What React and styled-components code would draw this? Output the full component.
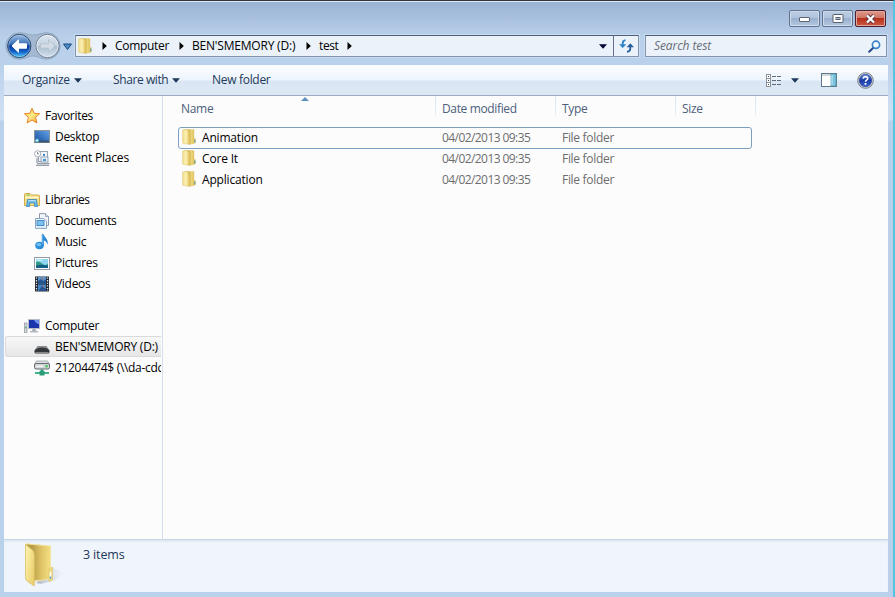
import React from "react";
import styled, { createGlobalStyle } from "styled-components";

const GlobalStyle = createGlobalStyle`
* {
    box-sizing: border-box;
}
body {
    margin: 0;
    overflow: hidden;
    background: #b9d1ea;
}
svg {
    display: block;
    flex: none;
}`;

const Window = styled.div`
    width: 895px;
    height: 597px;
    display: flex;
    flex-direction: column;
    padding: 0 5px 5px 4px;
    border-top: 1px solid #35353f;
    border-right: 2px solid #55c3e2;
    box-shadow: inset 0 1px 0 #dfe9f5;
    background: linear-gradient(#9ab3d3 0, #a9c1de 18px, #b9d0eb 36px, #bad1ec 64px, #c9dcf1 100px, #cfe0f3 118px, #b9d1ea 121px, #bad1ec 100%);
    font-family: "Open Sans", "Noto Sans", sans-serif;
    font-size: 12px;
    color: #000;
`;

const Label = styled.span`
    flex: none;
    line-height: 20px;
    white-space: pre;
    color: ${props => props.$color || "inherit"};
    letter-spacing: ${props => props.$track ?? -0.3}px;
`;

const TitleBar = styled.div`
    height: 34px;
    flex: none;
    display: flex;
    justify-content: flex-end;
    gap: 2px;
    padding: 9px 2px 0 0;
`;

const WindowButton = styled.button`
    width: 31px;
    height: 17px;
    display: flex;
    align-items: center;
    justify-content: center;
    padding: 0;
    border: 1px solid ${props => props.$close ? "#4d1d2a" : "#61748f"};
    border-radius: 2px;
    box-shadow: inset 0 0 0 1px ${props => props.$close ? "#e0a79f" : "#cddbeb"};
    background: ${props => props.$close ?
        "linear-gradient(#dd9a8c 0, #cf7362 48%, #b8301c 50%, #cb5a42 100%)" :
        "linear-gradient(#bccde2 0, #afc3dc 48%, #9ab1cf 50%, #b3c7df 100%)"};
`;

const NavBar = styled.div`
    height: 30px;
    flex: none;
    display: flex;
    align-items: flex-start;
    padding-right: 1px;
`;

const History = styled.div`
    width: 71px;
    height: 22px;
    flex: none;
    svg {
        margin-top: -3px;
    }
`;

const Field = styled.div`
    height: 22px;
    display: flex;
    align-items: center;
    border: 1px solid #8393ab;
    border-top-color: #4f5e78;
    background: #ebf2fa;
    box-shadow: 0 0 0 1px #c9dcf1;
`;

const AddressBar = styled(Field)`
    width: 564px;
    padding-left: 2px;
`;

const Crumb = styled.div`
    display: flex;
    align-items: center;
    width: ${props => props.$width}px;
`;

const Refresh = styled.div`
    width: 25px;
    height: 20px;
    display: flex;
    align-items: center;
    justify-content: center;
    margin-left: auto;
    border-left: 1px solid #63718a;
`;

const SearchBox = styled(Field)`
    flex: 1;
    justify-content: space-between;
    margin-left: 6px;
    padding: 0 5px 0 8px;
    font-style: italic;
`;

const Toolbar = styled.div`
    height: 31px;
    flex: none;
    display: flex;
    align-items: center;
    padding: 0 14px 1px 18px;
    border-top: 1px solid #f6faff;
    border-bottom: 1px solid #9caac4;
    background: linear-gradient(#fbfdff 0, #edf4fc 48%, #dbe6f4 52%, #dde8f5 100%);
    color: #1e395b;
`;

const MenuButton = styled.div`
    display: flex;
    align-items: center;
    gap: 4px;
    width: ${props => props.$width}px;
`;

const ToolIcons = styled.div`
    display: flex;
    align-items: center;
    margin-left: auto;
`;

const Gap = styled.div`
    width: ${props => props.$size}px;
    flex: none;
`;

const Body = styled.div`
    flex: 1;
    min-height: 0;
    display: flex;
    background: #fcfcfd;
`;

const Sidebar = styled.div`
    width: 159px;
    flex: none;
    padding-top: 9px;
    border-right: 1px solid #d6dff0;
    overflow: hidden;
`;

const Group = styled.div`
    margin-bottom: 21px;
`;

const TreeItem = styled.div`
    height: 21px;
    display: flex;
    align-items: center;
    gap: 5px;
    overflow: hidden;
    margin: 0 1px;
    padding-left: ${props => props.$root ? 18 : 28}px;
    border: 1px solid ${props => props.$selected ? "#dadada" : "transparent"};
    border-right: 0;
    border-radius: 3px 0 0 3px;
    background: ${props => props.$selected ? "linear-gradient(#f8f8f8, #e6e6e6)" : "none"};
`;

const Files = styled.div`
    flex: 1;
`;

const HeaderRow = styled.div`
    height: 31px;
    display: flex;
    padding-left: 12px;
    color: #4c607a;
`;

const HeaderCell = styled.div`
    width: ${props => props.$width}px;
    height: 20px;
    position: relative;
    display: flex;
    padding: 3px 0 0 6px;
    border-right: 1px solid;
    border-image: linear-gradient(#d5e2f2, #e9f0f8) 1;
`;

const SortMark = styled.svg`
    position: absolute;
    top: 1px;
    left: 126px;
`;

const FileRow = styled.div`
    width: 574px;
    height: ${props => props.$focused ? 22 : 21}px;
    display: grid;
    grid-template-columns: 20px 240px 120px auto;
    align-items: center;
    margin-left: 15px;
    margin-bottom: ${props => props.$focused ? -1 : 0}px;
    padding-left: ${props => props.$focused ? 3 : 4}px;
    border: ${props => props.$focused ? "1px solid #7c9fc0" : "0"};
    border-radius: 3px;
    color: #6d6d6d;
    svg {
        margin-top: -2px;
    }
`;

const Details = styled.div`
    height: 53px;
    flex: none;
    display: flex;
    padding: 3px 0 0 18px;
    border-top: 1px solid #c5d5e5;
    box-shadow: inset 0 2px 1px #e2eaf3;
    background: #f0f4fb;
    font-size: 12.5px;
`;

const Count = styled.div`
    padding: 2px 0 0 15px;
`;

const FolderIcon = ({ size = 16 }) => (
    <svg width={size * 0.9} height={size} viewBox="0 0 36 40">
        <defs>
            <linearGradient id="folderBack" x1="0" x2="1">
                <stop offset=".4" stopColor="#c9a944" />
                <stop offset=".7" stopColor="#ecd47a" />
                <stop offset="1" stopColor="#e3c55f" />
            </linearGradient>
            <linearGradient id="folderFront" x1="0" x2="1">
                <stop offset="0" stopColor="#f0dc8c" />
                <stop offset=".45" stopColor="#fdf2b5" />
                <stop offset="1" stopColor="#dcbb50" />
            </linearGradient>
        </defs>
        <path d="M7 1.500L30 1V36L20 38L7 33Z" fill="url(#folderBack)" stroke="#dcc36d" />
        <path d="M1.500 2.500L13 1.500Q20 5 20 12V39L3 36Q1.500 35 1.500 33Z" fill="url(#folderFront)" stroke="#d5ba58" />
        <path d="M28 25L34 22V35L28 37Z" fill="#e7ca62" />
        <path d="M32 26V34" stroke="#5b9caf" strokeWidth="3" />
    </svg>
);

const BigFolder = () => (
    <svg width="46" height="46" viewBox="0 0 46 46">
        <defs>
            <linearGradient id="bigBack" x1="0" x2="1">
                <stop offset=".25" stopColor="#b99d45" />
                <stop offset=".6" stopColor="#dcc265" />
                <stop offset="1" stopColor="#f5df83" />
            </linearGradient>
            <linearGradient id="bigFront" x1="0" x2="1" y1="0" y2=".7">
                <stop offset="0" stopColor="#fff5b5" />
                <stop offset="1" stopColor="#ebd06c" />
            </linearGradient>
            <linearGradient id="bigShade" x1="0" x2="1">
                <stop offset="0" stopColor="#9ba1aa" stopOpacity=".75" />
                <stop offset="1" stopColor="#c5cbd5" stopOpacity="0" />
            </linearGradient>
        </defs>
        <path d="M14 40L31 25L42 29L34 37L19 41Z" fill="url(#bigShade)" />
        <path d="M4 .8L28.500 3V36L12 38L5 30Z" fill="url(#bigBack)" stroke="#f1e4a2" />
        <path d="M3.500 1.500L10.500 7Q12.300 8.500 12.300 12V43L5 38Q3.500 37 3.500 34Z" fill="url(#bigFront)" stroke="#d8c16b" strokeWidth=".8" />
        <path d="M27 26L30.500 24V37L27 38.500Z" fill="#f1dc86" stroke="#d8bd60" strokeWidth=".6" />
        <path d="M28.500 29V36" stroke="#fff" strokeWidth="1.500" />
        <path d="M28.500 33.500V36" stroke="#62a6b8" strokeWidth="1.500" />
    </svg>
);

const Arrow = () => (
    <svg width="5" height="8" viewBox="0 0 5 8"><path d="M.5 0L4.800 4L.5 8Z" fill="#000" /></svg>
);

const DownArrow = ({ fill = "#1e395b" }) => (
    <svg width="8" height="5" viewBox="0 0 8 5"><path d="M0 .3H8L4 4.800Z" fill={fill} /></svg>
);

const HistoryIcon = () => (
    <svg width="71" height="28" viewBox="0 0 71 28">
        <defs>
            <linearGradient id="back" x1="0" y1="0" x2="0" y2="1">
                <stop offset="0" stopColor="#9fbfe4" />
                <stop offset=".43" stopColor="#376fb8" />
                <stop offset=".5" stopColor="#07399a" />
                <stop offset=".75" stopColor="#1663c9" />
                <stop offset="1" stopColor="#55d2ff" />
            </linearGradient>
            <linearGradient id="fwd" x1="0" y1="0" x2="0" y2="1">
                <stop offset="0" stopColor="#dce6f0" />
                <stop offset=".48" stopColor="#c3d0de" />
                <stop offset=".52" stopColor="#adbfd1" />
                <stop offset="1" stopColor="#d3e1ef" />
            </linearGradient>
        </defs>
        <path d="M15 .8C22 .8 24 3 29 3S37 .8 43 .8A13.200 13.200 0 0 1 43 27.200C37 27.200 34 24 29 24S22 27.200 15 27.200A13.200 13.200 0 0 1 15 .8Z" fill="#a3b8d1" stroke="#8ea3bd" strokeWidth=".8" />
        <circle cx="15.300" cy="14" r="11.600" fill="url(#back)" stroke="#27466f" />
        <circle cx="15.300" cy="14" r="10.700" fill="none" stroke="#cfe4f8" strokeOpacity=".5" strokeWidth=".8" />
        <path d="M8 14L14.500 7.800V11.800H22.500V16.200H14.500V20.200Z" fill="#fff" stroke="#fff" strokeLinejoin="round" />
        <circle cx="43.500" cy="14" r="11.600" fill="url(#fwd)" stroke="#6e7d91" />
        <circle cx="43.500" cy="14" r="10.600" fill="none" stroke="#eef4fa" strokeOpacity=".7" />
        <path d="M51 14L44.500 7.800V11.800H36.500V16.200H44.500V20.200Z" fill="#d3dce5" stroke="#b0bfcd" strokeLinejoin="round" strokeWidth=".8" />
        <path d="M59.500 12H67.500L63.500 17.500Z" fill="#478bc9" stroke="#234a7c" strokeLinejoin="round" />
    </svg>
);

const RefreshIcon = () => (
    <svg width="15" height="14" viewBox="0 0 15 14">
        <path d="M6.500 1.200Q3.700 1.500 3.700 4.500V7" fill="none" stroke="#2f83c5" strokeWidth="1.800" />
        <path d="M0 5.200H7.400L3.700 9Z" fill="#2f83c5" />
        <path d="M8 12.800Q11.300 12.500 11.300 9.500V7" fill="none" stroke="#2a5f9e" strokeWidth="1.800" />
        <path d="M7.600 8.200H15L11.300 4.300Z" fill="#2a5f9e" />
    </svg>
);

const SearchIcon = () => (
    <svg width="13" height="13" viewBox="0 0 13 13">
        <path d="M1.200 11.800L5.500 7.500" stroke="#294a86" strokeWidth="2" strokeLinecap="round" />
        <circle cx="8" cy="4.800" r="3.600" fill="#f4faff" stroke="#3b82c8" strokeWidth="1.700" />
    </svg>
);

const ViewIcon = () => (
    <svg width="16" height="13" viewBox="0 0 16 13">
        {[0, 4, 8].map(y => (
            <g key={y}>
                <rect x=".5" y={y + 0.5} width="4" height="4" fill="#fff" stroke="#8d9199" />
                <rect x="2" y={y + 2} width="1" height="1" fill="#444b5c" />
                <path d={`M6 ${y + 2.5}H10M11 ${y + 2.5}H15`} stroke="#626a7a" />
            </g>
        ))}
    </svg>
);

const PaneIcon = () => (
    <svg width="16" height="14" viewBox="0 0 16 14">
        <rect x=".5" y=".5" width="15" height="13" fill="#fff" stroke="#61788c" />
        <path d="M1 2H10" stroke="#c2cad2" strokeWidth="1.500" />
        <rect x="10" y="1" width="5" height="12" fill="#79c4dc" stroke="#5594ae" strokeWidth=".7" />
        <path d="M11 2V12" stroke="#c4ebf5" />
    </svg>
);

const HelpIcon = () => (
    <svg width="17" height="17" viewBox="0 0 17 17">
        <defs>
            <linearGradient id="help" x1="0" y1="0" x2="0" y2="1">
                <stop offset="0" stopColor="#5e86da" />
                <stop offset=".5" stopColor="#1b3ba4" />
                <stop offset="1" stopColor="#3c65cd" />
            </linearGradient>
        </defs>
        <circle cx="8.500" cy="8.500" r="7.800" fill="#d8dce3" stroke="#737985" />
        <circle cx="8.500" cy="8.500" r="6.200" fill="url(#help)" stroke="#25388b" strokeWidth=".6" />
        <path d="M6.200 6.600Q6.300 4.600 8.500 4.600T10.700 6.500Q10.700 7.500 9.600 8.100T8.500 9.800" fill="none" stroke="#fff" strokeWidth="1.600" />
        <rect x="7.600" y="11" width="1.800" height="1.800" fill="#fff" />
    </svg>
);

const icons = {
    star: (
        <svg width="16" height="16" viewBox="0 0 16 16">
            <defs>
                <linearGradient id="star" x1="0" y1="0" x2="1" y2="1">
                    <stop offset="0" stopColor="#ffc93a" />
                    <stop offset=".5" stopColor="#ffe98a" />
                    <stop offset="1" stopColor="#f59a1b" />
                </linearGradient>
            </defs>
            <path d="M8 .3L10.200 5.200L15.600 5.800L11.600 9.400L12.900 15L8 12L3.100 15L4.400 9.400L.4 5.800L5.800 5.200Z" fill="url(#star)" stroke="#e5842b" strokeLinejoin="round" />
        </svg>
    ),
    desktop: (
        <svg width="16" height="16" viewBox="0 0 16 16">
            <defs>
                <linearGradient id="desk" x1="0" y1="1" x2="1" y2="0">
                    <stop offset="0" stopColor="#1a4b9d" />
                    <stop offset="1" stopColor="#5fa4e8" />
                </linearGradient>
            </defs>
            <rect x=".5" y="1.500" width="15" height="12" fill="url(#desk)" stroke="#8c9297" />
            <rect x="1" y="11.500" width="14" height="2" fill="#3b5670" />
            <circle cx="3" cy="11.500" r="1.900" fill="#69c0e5" />
            <path d="M2 11.500H4" stroke="#e8f5ff" />
        </svg>
    ),
    recent: (
        <svg width="16" height="16" viewBox="0 0 16 16">
            <rect x="4.500" y="1.500" width="9" height="10" fill="#f0f4f8" stroke="#9aa5af" />
            <rect x="7" y="7" width="7" height="5" fill="#e4eff8" stroke="#8498aa" strokeWidth=".8" />
            <rect x="9" y="4" width="2" height="2" fill="#3488ce" />
            <rect x="9" y="9" width="3" height="2" fill="#4796d2" />
            <path d="M3 13.500H15.500M2 15.300H15" stroke="#98a1aa" strokeWidth="1.300" />
            <path d="M3 8V13" stroke="#a3acb4" strokeWidth="1.500" />
            <circle cx="3.600" cy="3.800" r="3.100" fill="#fff" stroke="#a4adb6" />
            <path d="M3.600 2V4H5" fill="none" stroke="#5f6a75" strokeWidth=".8" />
        </svg>
    ),
    libraries: (
        <svg width="16" height="16" viewBox="0 0 16 16">
            <path d="M.5 13.500V2.500Q.5 1.500 1.500 1.500H6L7.500 3H14.500Q15.500 3 15.500 4V13.500Z" fill="#f6df87" stroke="#cdae4b" />
            <path d="M1 5.500H15" stroke="#fff8cb" strokeWidth="1.300" />
            <path d="M2.500 3H6" stroke="#76bf75" />
            <path d="M2.500 14.500L3.500 7.500H12.500L13.500 14.500H10.500V11H5.500V14.500Z" fill="#69b9e8" stroke="#3d87bd" strokeWidth=".8" />
            <path d="M4.300 8.700H11.700" stroke="#c4ebfc" />
        </svg>
    ),
    documents: (
        <svg width="16" height="16" viewBox="0 0 16 16">
            <path d="M5.500 .6H11.500L14.500 3.500V12.500H5.500Z" fill="#f3f6fa" stroke="#8c9bac" />
            <path d="M11.500 .8V3.500H14.500" fill="#dce4ec" stroke="#8c9bac" strokeWidth=".8" />
            <path d="M1.500 5.500H9.500L12.500 8V15.400H1.500Z" fill="#f5faff" stroke="#8aa5be" />
            <rect x="3" y="7.500" width="7" height="5" fill="#7cc0ee" stroke="#448bcc" />
            <path d="M3 14.200H11" stroke="#c6dcee" />
        </svg>
    ),
    music: (
        <svg width="16" height="16" viewBox="0 0 16 16">
            <ellipse cx="5.500" cy="11.500" rx="4.300" ry="3.700" fill="#2b8cd8" />
            <ellipse cx="4.900" cy="10.600" rx="2.600" ry="1.700" fill="#70c1f2" />
            <path d="M7.800 .3H9.800C10 3.300 14.500 4.500 13.800 10.500Q12.500 7 9.800 6.300V12H7.800Z" fill="#2786d3" />
            <path d="M8.700 1V10.500" stroke="#71c0ef" strokeWidth=".8" />
        </svg>
    ),
    pictures: (
        <svg width="16" height="16" viewBox="0 0 16 16">
            <rect x=".5" y="2.500" width="15" height="12" fill="#fff" stroke="#929ba4" />
            <rect x="2" y="4" width="12" height="9" fill="#8ed7ef" />
            <path d="M2 7Q5 5.500 8 8.500T14 8.500V13H2Z" fill="#2f9a86" />
            <path d="M2 10.500Q7 9 14 10.500V13H2Z" fill="#155f87" />
            <path d="M3 5.300H8" stroke="#e9faff" />
        </svg>
    ),
    videos: (
        <svg width="16" height="16" viewBox="0 0 16 16">
            <rect x="1" y=".5" width="14" height="15" fill="#20262f" />
            <rect x="4" y="1" width="8" height="6.500" fill="#5296d6" />
            <rect x="4" y="8.500" width="8" height="6.500" fill="#4187ca" />
            <path d="M4 5L7 3L9 5L12 3.500V7.500H4ZM5 14L8 10L12 13V15H5Z" fill="#27538f" />
            <path d="M7 1L10 3L8 4ZM9 9L11 11L9 12Z" fill="#a17466" />
            <path d="M2.500 1.500V15M13.500 1.500V15" stroke="#e2e8ee" strokeWidth="1.300" strokeDasharray="1.300 1.300" />
        </svg>
    ),
    computer: (
        <svg width="16" height="16" viewBox="0 0 16 16">
            <rect x=".6" y="5" width="2.400" height="9.500" fill="#cfd4d9" stroke="#8c949c" strokeWidth=".7" />
            <rect x="1" y="9" width="1.600" height="1.200" fill="#53b36c" />
            <rect x="4.500" y="1.500" width="11" height="9" fill="#1b35ad" stroke="#b6bcc5" />
            <path d="M10 2H15V6Q12 6 10 2Z" fill="#6890ea" />
            <path d="M8.500 11H11.500L12 13H8Z" fill="#a7adb4" />
            <path d="M6 13.700H14" stroke="#b3b9c0" strokeWidth="1.400" />
        </svg>
    ),
    drive: (
        <svg width="16" height="16" viewBox="0 0 16 16">
            <path d="M3.500 7H12.500L15.500 11.500H.5Z" fill="#8d8f91" />
            <path d="M.5 11.500Q3 8.500 8 8.500T15.500 11.500V13Q15.500 14.500 14 14.500H2Q.5 14.500 .5 13Z" fill="#35383b" />
            <path d="M1.500 13.500H14.500" stroke="#85878a" strokeWidth="1.200" />
        </svg>
    ),
    network: (
        <svg width="16" height="16" viewBox="0 0 16 16">
            <path d="M2.500 1H13.500L15.500 4.500H.5Z" fill="#dfe2e5" stroke="#90969b" strokeWidth=".7" />
            <rect x=".5" y="3.500" width="15" height="5.500" rx="1.500" fill="#d4d7da" stroke="#646a70" />
            <rect x="11.500" y="5" width="2" height="2.500" fill="#35c44c" />
            <path d="M2.500 6.300H9" stroke="#fff" />
            <path d="M8 9.500V12" stroke="#2e9c76" strokeWidth="3" />
            <path d="M1 13H15" stroke="#43b58b" strokeWidth="2" />
            <rect x="5.500" y="11" width="5" height="4.500" fill="#2a9c78" />
        </svg>
    )
};

const tree = [
    [
        { icon: "star", name: "Favorites" },
        { icon: "desktop", name: "Desktop" },
        { icon: "recent", name: "Recent Places", track: -0.2 }
    ],
    [
        { icon: "libraries", name: "Libraries", track: -0.45 },
        { icon: "documents", name: "Documents" },
        { icon: "music", name: "Music" },
        { icon: "pictures", name: "Pictures" },
        { icon: "videos", name: "Videos" }
    ],
    [
        { icon: "computer", name: "Computer" },
        { icon: "drive", name: "BEN'SMEMORY (D:)", track: -0.22, selected: true },
        { icon: "network", name: "21204474$ (\\\\da-cdc", track: -0.32 }
    ]
];

const files = ["Animation", "Core It", "Application"];

const App = () => {
    return (
        <>
            <GlobalStyle />
            <Window>
                <TitleBar>
                    <WindowButton>
                        <svg width="13" height="7" viewBox="0 0 13 7"><rect x="1.500" y="2.500" width="10" height="4" rx=".5" fill="#fff" stroke="#5d6472" /></svg>
                    </WindowButton>
                    <WindowButton>
                        <svg width="12" height="9" viewBox="0 0 12 9">
                            <rect x="1" y=".5" width="10" height="8" rx=".5" fill="#fff" stroke="#555c6b" />
                            <rect x="4" y="3.500" width="4" height="2" fill="#a9bcd6" stroke="#555c6b" />
                        </svg>
                    </WindowButton>
                    <WindowButton $close>
                        <svg width="13" height="10" viewBox="0 0 13 10">
                            <path d="M3 1.500L10 8.500M10 1.500L3 8.500" stroke="#5d3a42" strokeWidth="4" />
                            <path d="M3 1.500L10 8.500M10 1.500L3 8.500" stroke="#fff" strokeWidth="2.300" />
                        </svg>
                    </WindowButton>
                </TitleBar>
                <NavBar>
                    <History><HistoryIcon /></History>
                    <AddressBar>
                        <Crumb $width={24}><FolderIcon /></Crumb>
                        <Crumb $width={13}><Arrow /></Crumb>
                        <Crumb $width={64}><Label>Computer</Label></Crumb>
                        <Crumb $width={13}><Arrow /></Crumb>
                        <Crumb $width={114}><Label $track={-0.2}>BEN'SMEMORY (D:)</Label></Crumb>
                        <Crumb $width={13}><Arrow /></Crumb>
                        <Crumb $width={28}><Label $track={-0.4}>test</Label></Crumb>
                        <Arrow />
                        <Gap $size={247} />
                        <DownArrow fill="#000033" />
                        <Refresh><RefreshIcon /></Refresh>
                    </AddressBar>
                    <SearchBox>
                        <Label $color="#686d75" $track={-0.08}>Search test</Label>
                        <SearchIcon />
                    </SearchBox>
                </NavBar>
                <Toolbar>
                    <MenuButton $width={91}><Label>Organize</Label><DownArrow /></MenuButton>
                    <MenuButton $width={99}><Label $track={-0.4}>Share with</Label><DownArrow /></MenuButton>
                    <MenuButton><Label>New folder</Label></MenuButton>
                    <ToolIcons>
                        <ViewIcon />
                        <Gap $size={9} />
                        <DownArrow />
                        <Gap $size={22} />
                        <PaneIcon />
                        <Gap $size={20} />
                        <HelpIcon />
                    </ToolIcons>
                </Toolbar>
                <Body>
                    <Sidebar>
                        {tree.map(group => (
                            <Group key={group[0].name}>
                                {group.map((item, i) => (
                                    <TreeItem key={item.name} $root={i === 0} $selected={item.selected}>
                                        {icons[item.icon]}
                                        <Label $track={item.track}>{item.name}</Label>
                                    </TreeItem>
                                ))}
                            </Group>
                        ))}
                    </Sidebar>
                    <Files>
                        <HeaderRow>
                            <HeaderCell $width={261}>
                                <Label>Name</Label>
                                <SortMark width="8" height="4" viewBox="0 0 8 4"><path d="M0 4L4 0L8 4Z" fill="#5c8fb9" /></SortMark>
                            </HeaderCell>
                            <HeaderCell $width={120}><Label $track={-0.36}>Date modified</Label></HeaderCell>
                            <HeaderCell $width={120}><Label>Type</Label></HeaderCell>
                            <HeaderCell $width={80}><Label>Size</Label></HeaderCell>
                        </HeaderRow>
                        {files.map((name, i) => (
                            <FileRow key={name} $focused={i === 0}>
                                <FolderIcon />
                                <Label $color="#000" $track={-0.18}>{name}</Label>
                                <Label $track={-0.57}>04/02/2013 09:35</Label>
                                <Label>File folder</Label>
                            </FileRow>
                        ))}
                    </Files>
                </Body>
                <Details>
                    <BigFolder />
                    <Count><Label $color="#1e395b" $track={-0.15}>3 items</Label></Count>
                </Details>
            </Window>
        </>
    );
};

export default App;
